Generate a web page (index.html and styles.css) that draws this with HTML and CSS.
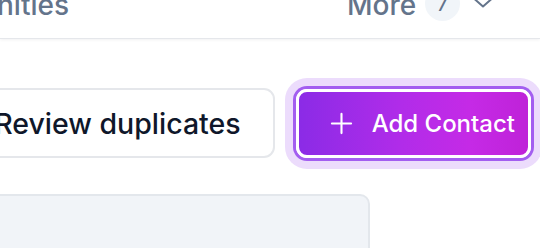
FILE: index.html
```html
<!DOCTYPE html>
<html lang="en">
<head>
<meta charset="utf-8">
<title>Contacts</title>
<link rel="stylesheet" href="styles.css">
</head>
<body>
<header class="nav">
  <div class="nav-left">
    <a class="nav-link nav-link-first" href="#">Opportunities</a>
  </div>
  <div class="nav-right">
    <a class="nav-link" href="#">More</a>
    <span class="badge">7</span>
    <svg class="chevron" viewBox="0 0 20 10" width="20" height="10" aria-hidden="true">
      <path d="M1.5 1 L10 8.5 L18.5 1" fill="none" stroke="#64748b" stroke-width="2" stroke-linecap="round" stroke-linejoin="round"/>
    </svg>
  </div>
</header>
<main class="main">
  <div class="toolbar">
    <button class="btn btn-secondary" type="button">Review duplicates</button>
    <button class="btn btn-primary" type="button">
      <svg class="plus" viewBox="0 0 24 24" width="23" height="23" aria-hidden="true">
        <path d="M12 2 V22 M2 12 H22" fill="none" stroke="#ffffff" stroke-width="2.2" stroke-linecap="round"/>
      </svg>
      <span>Add Contact</span>
    </button>
  </div>
  <div class="content">
    <section class="card"></section>
    <div></div>
  </div>
</main>
</body>
</html>
```
FILE: styles.css
```css
* { box-sizing: border-box; }
html, body { margin: 0; padding: 0; }
body {
  font-family: "Inter", "Liberation Sans", sans-serif;
  background: #ffffff;
  width: 540px;
  height: 248px;
  overflow: hidden;
}
.nav {
  display: flex;
  align-items: flex-start;
  height: 39px;
  border-bottom: 1px solid #e5e7eb;
  box-shadow: 0 1px 3px rgba(15, 23, 42, 0.06);
  background: #ffffff;
}
.nav-left {
  width: 69px;
  display: flex;
  justify-content: flex-end;
  white-space: nowrap;
  margin-top: -9px;
}
.nav-link {
  font-size: 28px;
  line-height: 28px;
  font-weight: 500;
  color: #64748b;
  text-decoration: none;
  white-space: nowrap;
}
.nav-right {
  display: flex;
  align-items: flex-start;
  margin-left: 278px;
  margin-top: -9px;
}
.badge {
  width: 35px;
  height: 35px;
  border-radius: 50%;
  background: #f1f5f9;
  color: #64748b;
  font-size: 22px;
  line-height: 35px;
  text-align: center;
  margin-left: 9px;
  margin-top: -5px;
}
.chevron {
  margin-left: 13px;
  margin-top: 7px;
}
.main {
  padding-top: 49px;
}
.toolbar {
  display: flex;
  justify-content: flex-end;
  align-items: center;
  gap: 21px;
  padding-right: 9px;
  height: 70px;
}
.btn {
  font-family: "Inter", "Liberation Sans", sans-serif;
  font-weight: 500;
  border-radius: 11px;
  display: flex;
  align-items: center;
  white-space: nowrap;
  cursor: pointer;
}
.btn-secondary {
  height: 70px;
  padding: 0 32px;
  font-size: 28.5px;
  background: #ffffff;
  border: 2px solid #e5e7eb;
  color: #0f172a;
}
.btn-primary {
  height: 69px;
  padding: 0 13px 0 31px;
  gap: 19px;
  font-size: 24px;
  color: #ffffff;
  border: 3px solid #ffffff;
  background: linear-gradient(90deg, #8b2be6 0%, #b12ce9 45%, #c52ae6 75%, #bf22d8 100%);
  box-shadow: 0 0 0 3px #a35ef0, 0 0 0 11px #ecdcfc;
}
.plus {
  flex: none;
}
.content {
  display: grid;
  grid-template-columns: 410px 1fr;
  margin-left: -40px;
  margin-top: 36px;
}
.card {
  height: 120px;
  background: #f1f4f8;
  border: 2px solid #e3e7ec;
  border-radius: 10px;
}
```
